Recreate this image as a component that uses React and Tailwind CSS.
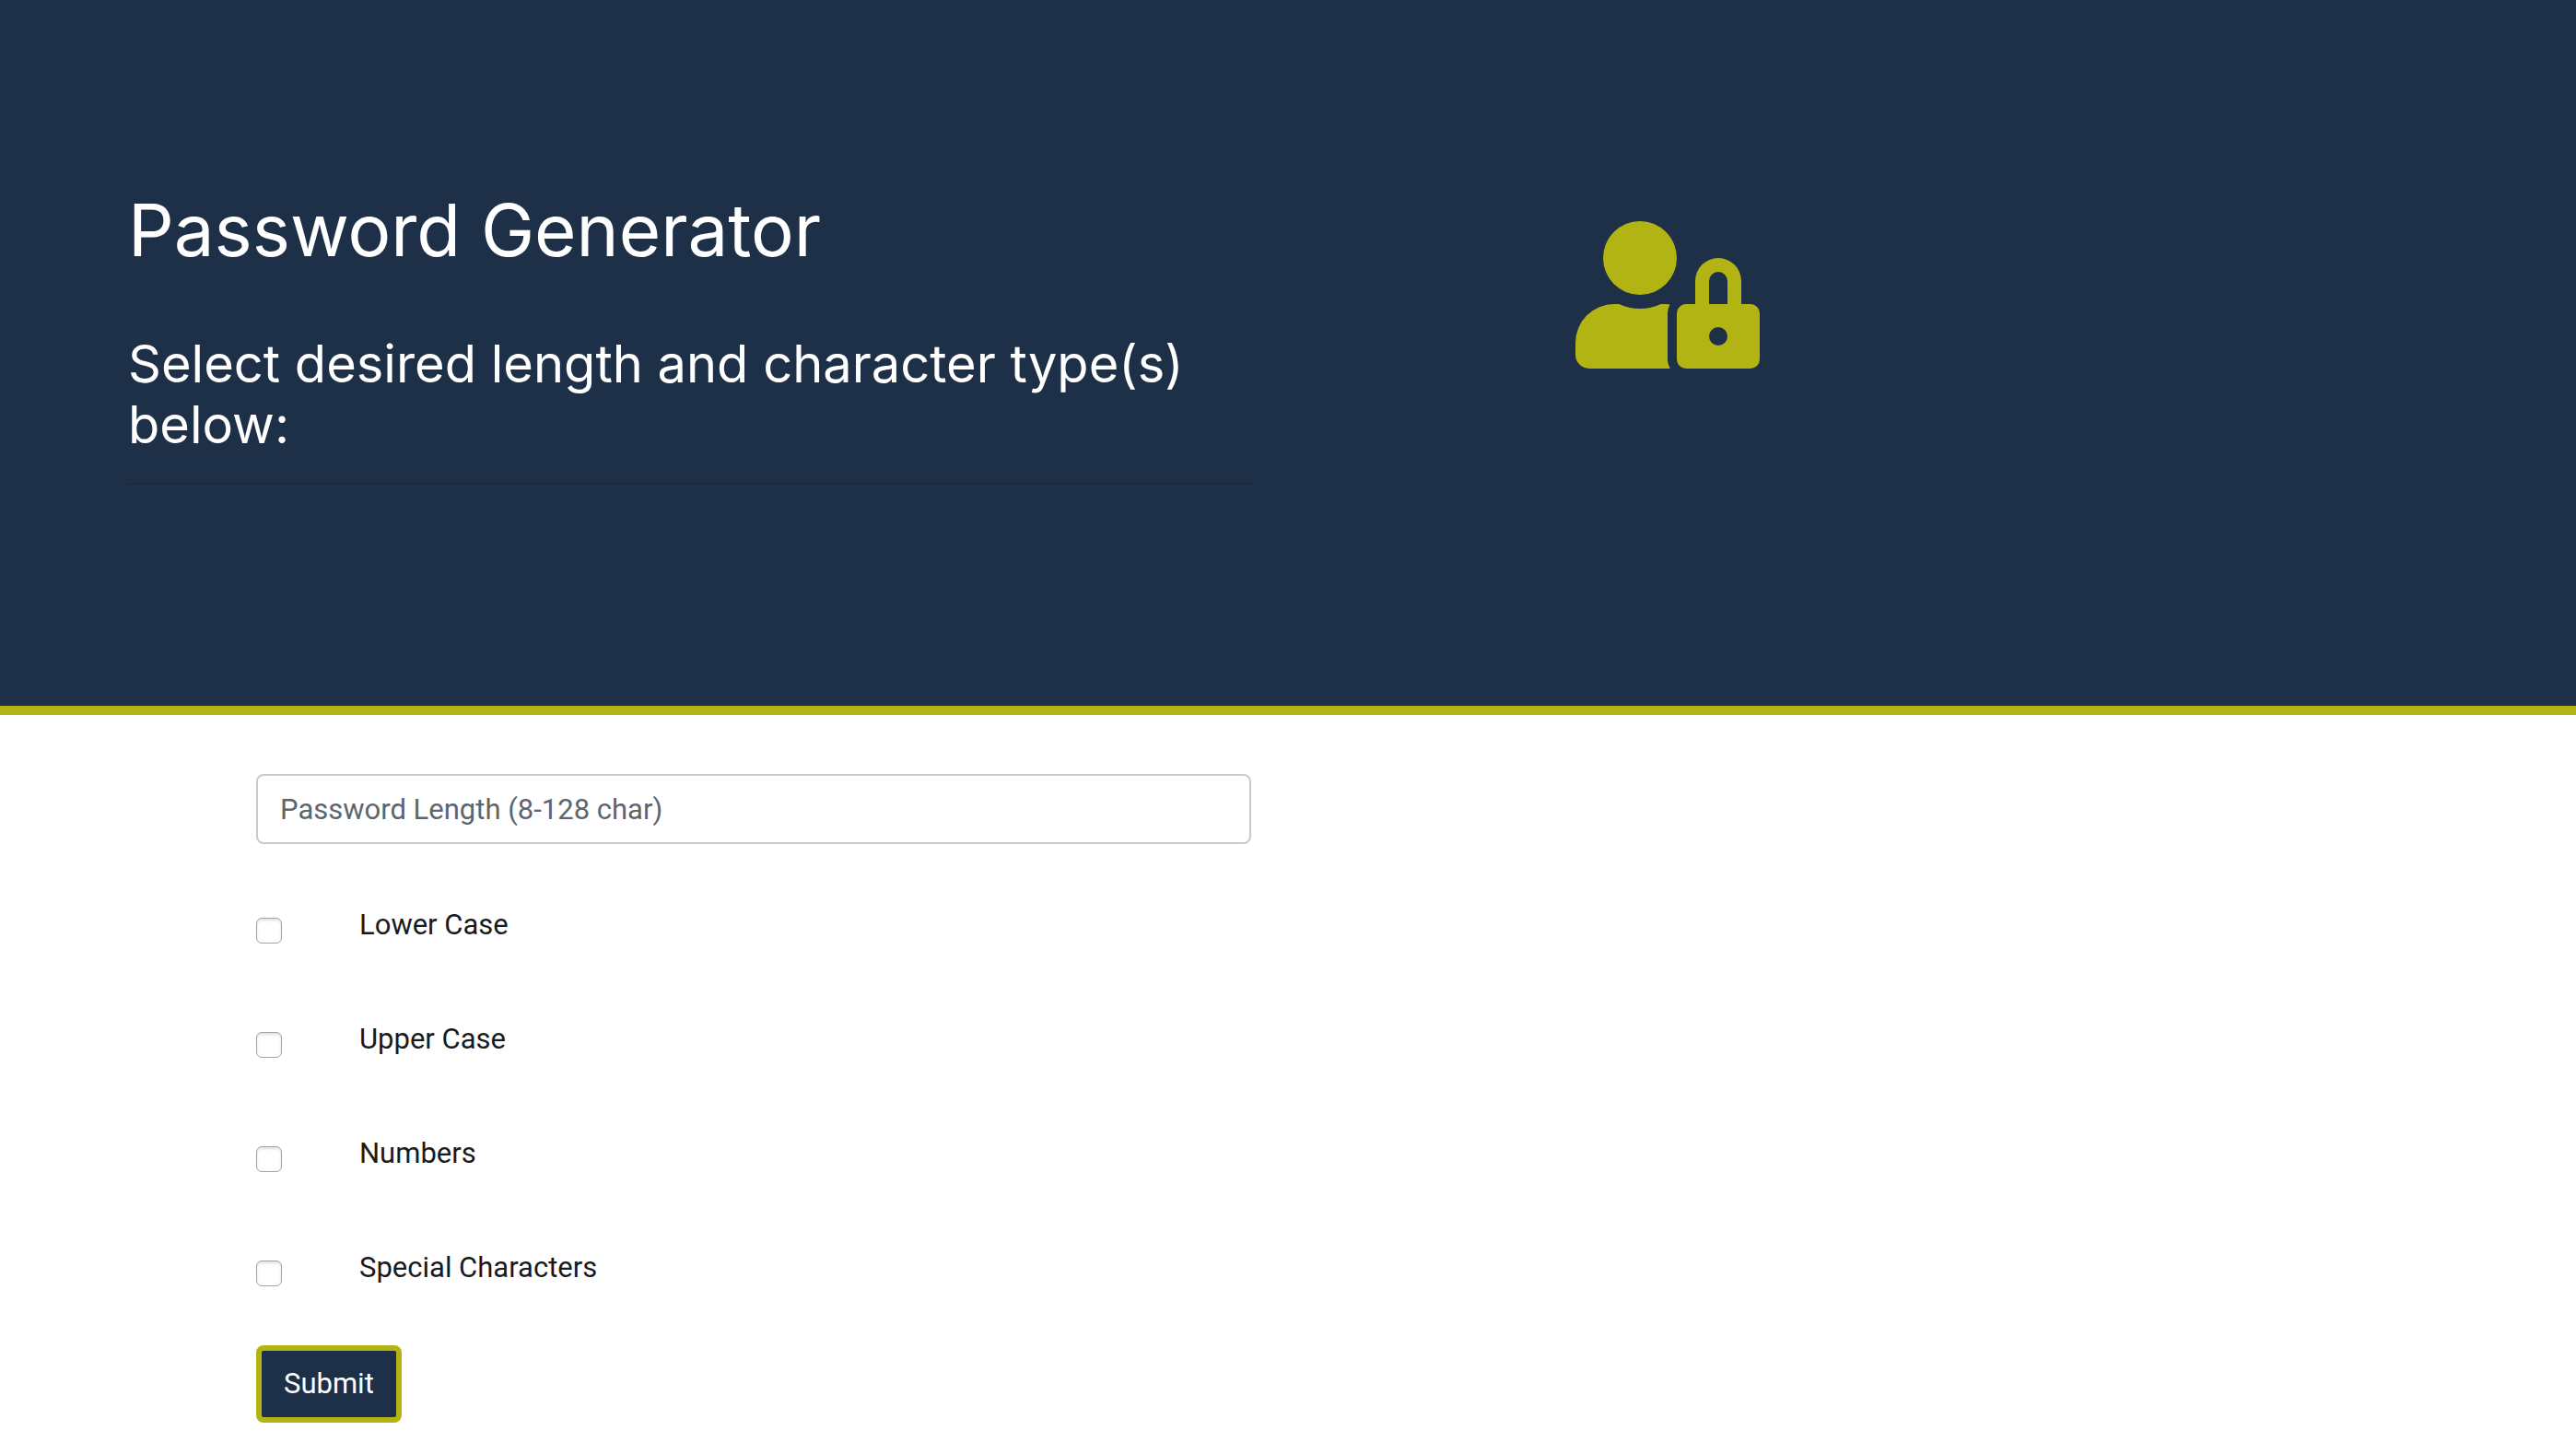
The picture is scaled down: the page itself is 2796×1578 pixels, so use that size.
import { FaUserLock } from "react-icons/fa";

const characterTypes = [
  { id: "lower-case", label: "Lower Case" },
  { id: "upper-case", label: "Upper Case" },
  { id: "numbers", label: "Numbers" },
  { id: "special-characters", label: "Special Characters" },
];

function Header() {
  return (
    <header className="grid grid-cols-2 border-b-[10px] border-[#b2b414] bg-[#1e3048] pt-[198px] pb-[240px] text-white">
      <div className="pr-10 pl-[139px] font-['Inter',sans-serif]">
        <h1 className="text-[78px] leading-[104px]">Password Generator</h1>
        <h2 className="mt-[60px] text-[56px] leading-[66px]">
          Select desired length and character type(s) below:
        </h2>
        <hr className="mt-[30px] border-t-2 border-[#1b2941]" />
      </div>
      <div className="pt-[42px] pl-[312px]">
        <FaUserLock className="h-[160px] w-[200px] text-[#b2b414]" aria-hidden="true" />
      </div>
    </header>
  );
}

function CharacterTypeOption({ id, label }) {
  return (
    <div className="flex h-[124px] items-start">
      <input
        id={id}
        type="checkbox"
        className="mt-4 size-7 appearance-none rounded-md border border-[#a3a3a3] bg-white shadow-[inset_0_2px_3px_rgba(0,0,0,0.12)] checked:bg-[#1e3048]"
      />
      <label htmlFor={id} className="ml-[84px] leading-[47px]">
        {label}
      </label>
    </div>
  );
}

export default function App() {
  return (
    <div className="min-h-screen bg-white font-['Roboto',sans-serif] text-[31px] text-[#181b1e]">
      <Header />
      <main className="grid grid-cols-2">
        <form className="pt-16 pr-10 pl-[278px]" onSubmit={(event) => event.preventDefault()}>
          <input
            type="text"
            aria-label="Password Length"
            placeholder="Password Length (8-128 char)"
            className="h-[76px] w-full rounded-lg border-2 border-[#c5cad5] bg-white px-6 placeholder:text-[#5d666f]"
          />
          <div className="mt-16">
            {characterTypes.map((type) => (
              <CharacterTypeOption key={type.id} {...type} />
            ))}
          </div>
          <button
            type="submit"
            className="-mt-4 rounded-lg border-[6px] border-[#b2b414] bg-[#1e3048] px-6 py-3 leading-[48px] text-white"
          >
            Submit
          </button>
        </form>
      </main>
    </div>
  );
}
